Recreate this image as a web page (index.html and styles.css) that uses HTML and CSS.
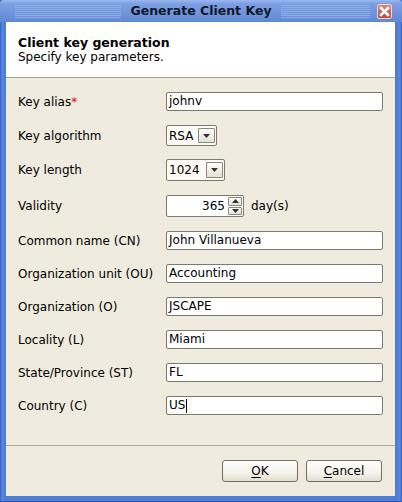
FILE: index.html
```html
<!DOCTYPE html>
<html>
<head>
<meta charset="utf-8">
<link rel="stylesheet" href="styles.css">
</head>
<body>
<div class="window">
  <div class="titlebar">
    <div class="tb-left"><div class="stripes"></div></div>
    <div class="title">Generate Client Key</div>
    <div class="tb-right"><div class="stripes"></div><div class="close"><svg width="15" height="15" viewBox="0 0 15 15"><path d="M4 4 L11 11 M11 4 L4 11" stroke="#fff" stroke-width="2.6" stroke-linecap="square"/></svg></div></div>
  </div>
  <div class="inner">
    <div class="header">
      <div class="h-title">Client key generation</div>
      <div class="h-sub">Specify key parameters.</div>
    </div>
    <div class="form">
      <div class="row r-alias"><div class="label">Key alias<span class="req">*</span></div><div class="input">johnv</div></div>
      <div class="row r-algo"><div class="label">Key algorithm</div><div class="combo w-rsa"><span class="cval">RSA</span><span class="cbtn"><svg width="7" height="4" viewBox="0 0 7 4"><path d="M0 0 H7 L3.5 4 Z" fill="#333"/></svg></span></div></div>
      <div class="row r-len"><div class="label">Key length</div><div class="combo w-len"><span class="cval">1024</span><span class="cbtn"><svg width="7" height="4" viewBox="0 0 7 4"><path d="M0 0 H7 L3.5 4 Z" fill="#333"/></svg></span></div></div>
      <div class="row r-valid"><div class="label">Validity</div><div class="spinner"><span class="sval">365</span><span class="sbtns"><span class="sbtn"><svg width="7" height="4" viewBox="0 0 7 4"><path d="M0 4 H7 L3.5 0 Z" fill="#333"/></svg></span><span class="sbtn"><svg width="7" height="4" viewBox="0 0 7 4"><path d="M0 0 H7 L3.5 4 Z" fill="#333"/></svg></span></span></div><span class="unit">day(s)</span></div>
      <div class="row"><div class="label">Common name (CN)</div><div class="input">John Villanueva</div></div>
      <div class="row"><div class="label">Organization unit (OU)</div><div class="input">Accounting</div></div>
      <div class="row"><div class="label">Organization (O)</div><div class="input">JSCAPE</div></div>
      <div class="row"><div class="label">Locality (L)</div><div class="input">Miami</div></div>
      <div class="row"><div class="label">State/Province (ST)</div><div class="input">FL</div></div>
      <div class="row"><div class="label">Country (C)</div><div class="input">US<span class="caret"></span></div></div>
    </div>
    <div class="footer">
      <div class="btn"><u>O</u>K</div>
      <div class="btn"><u>C</u>ancel</div>
    </div>
  </div>
</div>
</body>
</html>
```
FILE: styles.css
```css
* { box-sizing: border-box; }
html, body { margin: 0; padding: 0; }
body {
  width: 402px; height: 502px; overflow: hidden;
  font-family: "DejaVu Sans", sans-serif; font-size: 12px; color: #000;
}
.window {
  width: 402px; height: 502px;
  display: flex; flex-direction: column;
  background: linear-gradient(90deg, #2f5fbf 0, #5b88da 2px, #4f7dd3 5px, #4f7dd3 calc(100% - 5px), #5b88da calc(100% - 2px), #2f5fbf 100%);
  border-bottom: 1px solid #2a56b4;
}
.titlebar {
  height: 22px; flex: none;
  display: grid; grid-template-columns: 1fr auto 1fr; align-items: center;
  background: linear-gradient(#9ab8f0 0, #7c9fe2 4px, #6f94dc 14px, #5e87d4 22px);
  border-radius: 4px 4px 0 0;
}
.tb-left { display: flex; align-items: center; padding: 0 9px 0 15px; }
.tb-right { display: flex; align-items: center; padding: 0 10px 0 9px; }
.stripes {
  flex: 1; height: 13px;
  background: repeating-linear-gradient(#8eaeea 0 1px, transparent 1px 2px);
}
.title {
  font-weight: bold; font-size: 12.5px; color: #101828;
  line-height: 22px;
}
.close {
  width: 15px; height: 15px; margin-left: 7px;
  background: linear-gradient(#d88a80, #bb4a3e);
  border: 1px solid #f0d6d2; border-radius: 2px;
  display: flex; align-items: center; justify-content: center;
}
.close svg { display: block; margin: -1px; }
.inner {
  flex: 1; display: flex; flex-direction: column;
  margin: 0 7px 5px 6px;
  background: #efecdf;
}
.header {
  height: 56px; flex: none;
  background: #fff;
  border-bottom: 1px solid #aca899;
  padding: 13px 0 0 12px;
}
.h-title { font-weight: bold; font-size: 12.5px; line-height: 15px; }
.h-sub { line-height: 15px; }
.form {
  flex: 1;
  padding: 14px 12px 0 12px;
  display: flex; flex-direction: column;
}
.row { display: flex; align-items: center; height: 19px; margin-bottom: 14px; }
.r-algo { height: 21px; margin-bottom: 13px; }
.r-len { height: 22px; margin-bottom: 14px; }
.r-valid { height: 22px; margin-bottom: 14px; }
.label { width: 148px; flex: none; }
.req { color: #e00000; }
.input {
  width: 217px; height: 19px;
  background: #fff;
  border: 1px solid #7b7b6b; border-radius: 2px;
  padding: 0 2px; line-height: 17px;
  display: flex; align-items: center;
}
.caret { display: inline-block; width: 1px; height: 14px; background: #000; margin-left: 1px; }
.combo {
  height: 100%;
  display: flex; align-items: center;
  border: 1px solid #7b7b6b; border-radius: 2px;
  background: #fbfaf6;
  padding: 0 1px 0 2px;
}
.w-rsa { width: 51px; }
.w-len { width: 59px; }
.cval { flex: 1; }
.cbtn {
  width: 17px; height: calc(100% - 4px);
  display: flex; align-items: center; justify-content: center;
  border: 1px solid #8a8a7c; border-radius: 1px;
  background: linear-gradient(#fdfdfb, #e4e1d4);
}
.cbtn svg { display: block; }
.spinner {
  width: 78px; height: 100%;
  display: flex; align-items: center;
  border: 1px solid #7b7b6b; border-radius: 2px;
  background: #fff;
  padding: 1px;
}
.sval { flex: 1; text-align: right; padding-right: 3px; }
.sbtns { width: 14px; height: 100%; display: flex; flex-direction: column; gap: 1px; }
.sbtn {
  flex: 1;
  display: flex; align-items: center; justify-content: center;
  border: 1px solid #8a8a7c; border-radius: 1px;
  background: linear-gradient(#fdfdfb, #e4e1d4);
}
.sbtn svg { display: block; }
.unit { margin-left: 7px; }
.footer {
  flex: none; height: 51px;
  border-top: 1px solid #aca899;
  display: flex; justify-content: flex-end; align-items: flex-start;
  gap: 8px;
  padding: 14px 13px 0 0;
}
.btn {
  width: 76px; height: 22px;
  border: 1px solid #6f6f62; border-radius: 3px;
  background: linear-gradient(#ffffff, #f4f2ea 60%, #e2ded0);
  display: flex; align-items: center; justify-content: center;
}
.btn u { text-decoration-thickness: 1px; text-underline-offset: 2px; }
```
